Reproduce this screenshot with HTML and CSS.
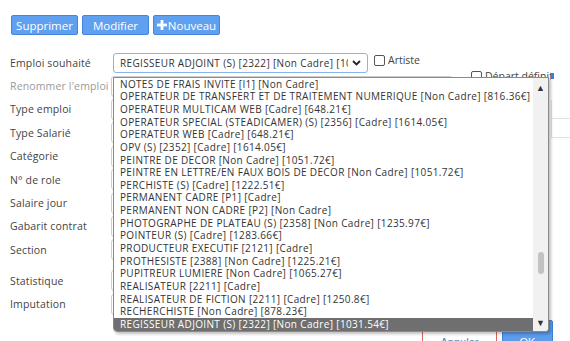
FILE: index.html
```html
<!DOCTYPE html>
<html lang="fr">
<head>
  <meta charset="UTF-8" />
  <title>Emploi</title>
  <link rel="stylesheet" href="styles.css">
</head>
<body>
  <div class="toolbar">
    <button class="btn">Supprimer</button>
    <button class="btn">Modifier</button>
    <button class="btn"><svg class="plus" width="10" height="10" viewBox="0 0 10 10"><rect x="3.6" y="0" width="2.8" height="10" fill="#fff"/><rect x="0" y="3.6" width="10" height="2.8" fill="#fff"/></svg>Nouveau</button>
  </div>

  <div class="main">
    <div class="fields">
      <div class="row">
        <span class="lbl">Emploi souhaité</span>
        <div class="combo">
          <div class="select">
            <span class="select-text">REGISSEUR ADJOINT (S) [2322] [Non Cadre] [1031.54€]</span>
            <svg class="chevron" width="9" height="6" viewBox="0 0 9 6"><path d="M1 1 L4.5 4.5 L8 1" fill="none" stroke="#222" stroke-width="1.8"/></svg>
          </div>
          <div class="listbox">
            <ul class="options">
              <li>NOTES DE FRAIS INVITE [I1] [Non Cadre]</li>
              <li>OPERATEUR DE TRANSFERT ET DE TRAITEMENT NUMERIQUE [Non Cadre] [816.36€]</li>
              <li>OPERATEUR MULTICAM WEB [Cadre] [648.21€]</li>
              <li>OPERATEUR SPECIAL (STEADICAMER) (S) [2356] [Cadre] [1614.05€]</li>
              <li>OPERATEUR WEB [Cadre] [648.21€]</li>
              <li>OPV (S) [2352] [Cadre] [1614.05€]</li>
              <li>PEINTRE DE DECOR [Non Cadre] [1051.72€]</li>
              <li>PEINTRE EN LETTRE/EN FAUX BOIS DE DECOR [Non Cadre] [1051.72€]</li>
              <li>PERCHISTE (S) [Cadre] [1222.51€]</li>
              <li>PERMANENT CADRE [P1] [Cadre]</li>
              <li>PERMANENT NON CADRE [P2] [Non Cadre]</li>
              <li>PHOTOGRAPHE DE PLATEAU (S) [2358] [Non Cadre] [1235.97€]</li>
              <li>POINTEUR (S) [Cadre] [1283.66€]</li>
              <li>PRODUCTEUR EXECUTIF [2121] [Cadre]</li>
              <li>PROTHESISTE [2388] [Non Cadre] [1225.21€]</li>
              <li>PUPITREUR LUMIERE [Non Cadre] [1065.27€]</li>
              <li>REALISATEUR [2211] [Cadre]</li>
              <li>REALISATEUR DE FICTION [2211] [Cadre] [1250.8€]</li>
              <li>RECHERCHISTE [Non Cadre] [878.23€]</li>
              <li class="selected">REGISSEUR ADJOINT (S) [2322] [Non Cadre] [1031.54€]</li>
            </ul>
            <div class="scrollbar">
              <span class="arrow">&#9650;</span>
              <span class="thumb"></span>
              <span class="arrow">&#9660;</span>
            </div>
          </div>
        </div>
        <label class="check"><span class="box"></span>Artiste</label>
      </div>
      <div class="row"><span class="lbl muted">Renommer l'emploi</span><span class="input"></span></div>
      <div class="row"><span class="lbl">Type emploi</span><span class="input"></span></div>
      <div class="row"><span class="lbl">Type Salarié</span><span class="input"></span></div>
      <div class="row"><span class="lbl">Catégorie</span><span class="input"></span></div>
      <div class="row"><span class="lbl">N° de role</span><span class="input"></span></div>
      <div class="row"><span class="lbl">Salaire jour</span><span class="input"></span></div>
      <div class="row"><span class="lbl">Gabarit contrat</span><span class="input"></span></div>
      <div class="row"><span class="lbl">Section</span><span class="input"></span></div>
      <div class="row spaced"><span class="lbl">Statistique</span><span class="input"></span></div>
      <div class="row"><span class="lbl">Imputation</span><span class="input"></span></div>
    </div>

    <div class="side">
      <label class="check depart"><span class="box"></span><span class="clip">Départ définitif</span><span class="mark"></span></label>
      <div class="table">
        <div class="trow"></div>
        <div class="trow"></div>
      </div>
    </div>
  </div>

  <div class="footer">
    <button class="btn-cancel">Annuler</button>
    <button class="btn-ok">OK</button>
  </div>
</body>
</html>
```

FILE: styles.css
```css
body {
  margin: 0;
  font-family: "Open Sans", Arial, sans-serif;
  color: #444;
  background: #fff;
  width: 570px;
  height: 341px;
  overflow: hidden;
}
.toolbar {
  display: flex;
  gap: 4px;
  padding: 15px 0 0 11px;
}
.btn {
  width: 67px;
  height: 20px;
  padding: 0;
  background: #60a0f0;
  border: 1px solid #4686da;
  border-radius: 2px;
  color: #fff;
  font-family: "Open Sans", Arial, sans-serif;
  font-size: 11.5px;
  display: flex;
  align-items: center;
  justify-content: center;
}
.plus {
  margin-right: 1px;
}
.main {
  display: flex;
  margin-top: 16px;
}
.fields {
  width: 471px;
  flex-shrink: 0;
}
.row {
  display: flex;
  align-items: center;
  height: 23.4px;
}
.row.spaced {
  margin-top: 7.6px;
}
.lbl {
  width: 101px;
  padding-left: 10px;
  font-size: 10.5px;
  letter-spacing: 0.15px;
  white-space: nowrap;
  overflow: hidden;
}
.muted {
  color: #9a9a9a;
}
.input {
  width: 340px;
  height: 19px;
  border: 1px solid #cfcfcf;
  border-radius: 3px;
}
.combo {
  position: relative;
  margin-left: 2px;
}
.select {
  width: 241px;
  height: 18px;
  border: 1px solid #8ab4ec;
  border-radius: 3px;
  display: flex;
  align-items: center;
  padding: 0 6px 0 6px;
  font-size: 10px;
  letter-spacing: 0.35px;
  color: #333;
  background: #fff;
}
.select-text {
  width: 229px;
  white-space: nowrap;
  overflow: hidden;
}
.chevron {
  margin-left: 4px;
}
.listbox {
  position: absolute;
  top: 24px;
  left: 0;
  width: 434px;
  height: 253px;
  border: 1px solid #8a8a8a;
  border-radius: 0 0 4px 4px;
  background: #fff;
  box-shadow: 2px 2px 3px rgba(0, 0, 0, 0.25);
  display: flex;
  overflow: hidden;
  z-index: 5;
}
.options {
  flex: 1;
  list-style: none;
  margin: 0;
  padding: 0;
  font-size: 10px;
  letter-spacing: 0.35px;
  color: #333;
}
.options li {
  height: 12.65px;
  line-height: 12.65px;
  padding-left: 6px;
  white-space: nowrap;
  overflow: hidden;
}
.options li.selected {
  background: #6f6f6f;
  color: #fff;
}
.scrollbar {
  width: 15px;
  padding: 4px 0 2px;
  background: #f1f1f1;
  display: flex;
  flex-direction: column;
  align-items: center;
  font-size: 9px;
  color: #333;
  line-height: 12px;
}
.thumb {
  width: 6px;
  height: 22px;
  border-radius: 3px;
  background: #c2c2c2;
  margin-top: auto;
  margin-bottom: 43px;
}
.check {
  display: flex;
  align-items: center;
  font-size: 10.5px;
  color: #444;
  white-space: nowrap;
}
.box {
  width: 9px;
  height: 9px;
  border: 1px solid #555;
  border-radius: 2px;
  margin-right: 3px;
}
.row .check {
  margin-left: 6px;
  margin-top: -5px;
}
.side {
  flex: 1;
  padding-top: 18px;
  overflow: hidden;
}
.depart .clip {
  width: 66px;
  overflow: hidden;
}
.mark {
  width: 3px;
  height: 6px;
  background: #3d7fd8;
}
.table {
  margin-top: 17px;
  margin-left: 80px;
  border-left: 1px solid #e2e2e2;
}
.trow {
  height: 18px;
  border-bottom: 1px solid #e2e2e2;
}
.footer {
  display: flex;
  justify-content: flex-end;
  gap: 5px;
  padding-right: 17px;
  margin-top: 4px;
}
.btn-cancel {
  width: 75px;
  height: 44px;
  background: #fff;
  border: 1px solid #d46060;
  border-radius: 2px;
  color: #4a7fc8;
  font-size: 11px;
}
.btn-ok {
  width: 51px;
  height: 44px;
  background: #5b9cec;
  border: 1px solid #3f80d6;
  border-radius: 2px;
  color: #fff;
  font-size: 11px;
}
```
